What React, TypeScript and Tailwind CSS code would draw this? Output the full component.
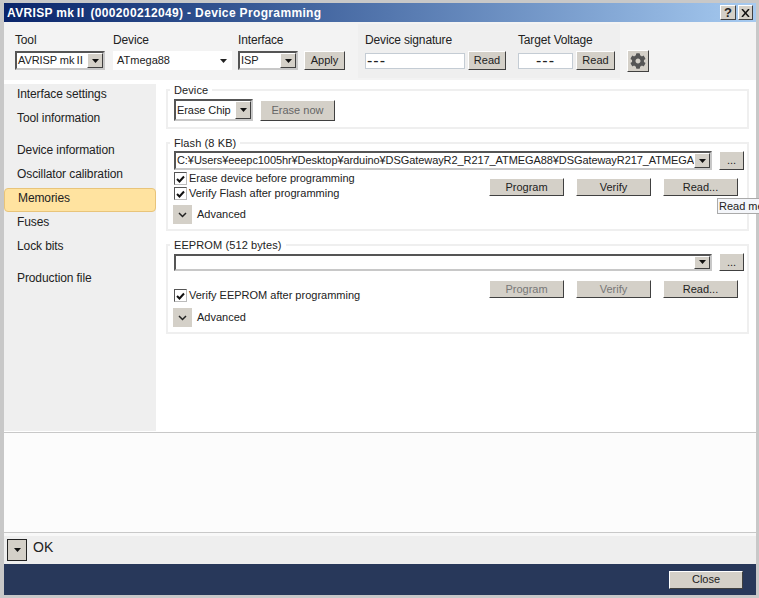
import { FaCog } from 'react-icons/fa';

const raised =
  'border border-t-white border-l-white border-r-[#404040] border-b-[#404040] bg-[#d4d0c8] text-[11px] text-[#222] flex items-center justify-center';

function Btn({ label, className = '', disabled = false }: { label: string; className?: string; disabled?: boolean }) {
  return <button className={`${raised} ${disabled ? 'text-[#777]' : ''} ${className}`}>{label}</button>;
}

function ArrowBox() {
  return (
    <span className={`${raised} w-4 h-full shrink-0`}>
      <svg width="7" height="4" viewBox="0 0 7 4">
        <path d="M0 0h7L3.500 4z" fill="#111" />
      </svg>
    </span>
  );
}

function Select({ value, className = '' }: { value: string; className?: string }) {
  return (
    <div className={`flex items-center bg-white border-2 border-t-[#555] border-l-[#555] border-r-[#c8c8c8] border-b-[#c8c8c8] ${className}`}>
      <span className="flex-1 min-w-0 overflow-hidden whitespace-nowrap pl-px text-[11px] tracking-[-0.08px] text-[#222]">{value}</span>
      <ArrowBox />
    </div>
  );
}

function Check({ label, className = '' }: { label: string; className?: string }) {
  return (
    <label className={`flex items-center h-[15px] text-[11px] text-[#222] ${className}`}>
      <span className="w-[13px] h-[13px] shrink-0 mr-[2px] bg-white border border-t-[#555] border-l-[#555] border-r-[#bbb] border-b-[#bbb] flex items-center justify-center">
        <svg width="9" height="8" viewBox="0 0 9 8">
          <path d="M1 4l2.500 2.500L8 1.500" fill="none" stroke="#111" strokeWidth="2" />
        </svg>
      </span>
      {label}
    </label>
  );
}

function Advanced() {
  return (
    <div className="flex items-center -ml-px">
      <span className="w-[19px] h-[19px] bg-[#d4d0c8] flex items-center justify-center">
        <svg width="9" height="6" viewBox="0 0 9 6">
          <path d="M1 1l3.500 3.500L8 1" fill="none" stroke="#222" strokeWidth="1.500" />
        </svg>
      </span>
      <span className="ml-[5px] text-[11px] text-[#222]">Advanced</span>
    </div>
  );
}

function Group({ title, children }: { title: string; children: React.ReactNode }) {
  return (
    <fieldset className="border-2 border-[#efefef] min-w-0 pl-1.5 pr-[3px]">
      <legend className="-ml-1 px-1 text-[11px] tracking-[0.1px] leading-3 text-[#222]">{title}</legend>
      {children}
    </fieldset>
  );
}

function NavItem({ label, active = false }: { label: string; active?: boolean }) {
  return (
    <div
      className={`h-6 pb-1 pl-[13px] flex items-center text-xs tracking-[-0.1px] text-[#222] rounded-sm ${
        active ? 'bg-[#ffe3a0] border border-[#e8c47a] pl-3' : ''
      }`}
    >
      {label}
    </div>
  );
}

function FieldLabel({ text }: { text: string }) {
  return <div className="text-xs tracking-[-0.15px] leading-3 mb-[5px] text-[#222]">{text}</div>;
}

export default function App() {
  return (
    <div className="relative w-[759px] h-[598px] overflow-hidden bg-[#c8c8c8] pl-1 pr-[3px] pt-[3px] pb-[3px] font-['Liberation_Sans','Noto_Sans_CJK_JP',sans-serif]">
      {/* title bar */}
      <div className="h-[19px] flex items-center pl-[3px] pr-[3px] bg-gradient-to-r from-[#0a246a] to-[#a6caf0]">
        <span className="flex-1 text-xs font-bold tracking-[0.35px] text-white whitespace-nowrap">
          AVRISP mkⅡ (000200212049) - Device Programming
        </span>
        <button className={`${raised} w-[16px] h-[15px] font-bold !text-[13px] mr-[2px]`}>?</button>
        <button className={`${raised} w-[15px] h-[15px]`}>
          <svg width="9" height="8" viewBox="0 0 9 8">
            <path d="M1 0l7 8M8 0l-7 8" stroke="#111" strokeWidth="1.500" />
          </svg>
        </button>
      </div>

      {/* toolbar */}
      <div className="h-[58px] flex bg-[#f3f3f3] pl-[11px]">
        <div className="flex items-end pb-[10px]">
          <div className="w-[90px] mr-2">
            <FieldLabel text="Tool" />
            <Select value="AVRISP mkⅡ" className="h-[19px]" />
          </div>
          <div className="w-[119px] mr-1.5">
            <FieldLabel text="Device" />
            <div className="h-[19px] bg-white flex items-center justify-between pl-1 pr-[5px] text-[11px] text-[#222]">
              ATmega88
              <svg width="7" height="4" viewBox="0 0 7 4">
                <path d="M0 0h7L3.500 4z" fill="#222" />
              </svg>
            </div>
          </div>
          <div className="w-[60px] mr-1.5">
            <FieldLabel text="Interface" />
            <Select value="ISP" className="h-[19px]" />
          </div>
          <Btn label="Apply" className="w-[41px] h-[19px]" />
        </div>

        <div className="ml-[13px] my-0.5 pl-[7px] pr-[5px] pt-2.5 bg-[#efefef] flex">
          <div>
            <FieldLabel text="Device signature" />
            <div className="flex items-center gap-[3px]">
              <div className="w-[100px] h-4 bg-white border border-[#c4ccd4] pl-px text-base tracking-[1px] leading-[14px] text-[#222]">---</div>
              <Btn label="Read" className="w-[38px] h-[19px]" />
            </div>
          </div>
          <div className="ml-3">
            <FieldLabel text="Target Voltage" />
            <div className="flex items-center gap-[3px]">
              <div className="w-[55px] h-4 bg-white border border-[#c4ccd4] text-center text-base tracking-[1px] leading-[14px] text-[#222]">---</div>
              <Btn label="Read" className="w-[39px] h-[19px]" />
            </div>
          </div>
        </div>

        <button className={`${raised} ml-[7px] mt-[28px] w-[22px] h-[22px]`}>
          <FaCog className="w-4 h-4 text-[#555]" />
        </button>
      </div>

      {/* body */}
      <div className="h-[352px] flex bg-white pt-1 pb-px">
        <div className="w-[152px] bg-[#efefef] flex flex-col">
          <NavItem label="Interface settings" />
          <NavItem label="Tool information" />
          <div className="h-2 shrink-0" />
          <NavItem label="Device information" />
          <NavItem label="Oscillator calibration" />
          <NavItem label="Memories" active />
          <NavItem label="Fuses" />
          <NavItem label="Lock bits" />
          <div className="h-2 shrink-0" />
          <NavItem label="Production file" />
        </div>

        <div className="flex-1 min-w-0 pl-2.5 pr-[7px] flex flex-col gap-2">
          <Group title="Device">
            <div className="pt-[3px] pb-[6px] flex items-center">
              <Select value="Erase Chip" className="w-[79px] h-[22px]" />
              <Btn label="Erase now" className="ml-[7px] w-[75px] h-[21px] text-[#666]" />
            </div>
          </Group>

          <Group title="Flash (8 KB)">
            <div className="pt-0.5 pb-[5px]">
              <div className="flex items-center gap-[7px]">
                <Select
                  value="C:¥Users¥eeepc1005hr¥Desktop¥arduino¥DSGatewayR2_R217_ATMEGA88¥DSGatewayR217_ATMEGA"
                  className="flex-1 min-w-0 h-[19px]"
                />
                <Btn label="..." className="w-[25px] h-[19px]" />
              </div>
              <div className="flex justify-between pr-1.5 mt-px">
                <div>
                  <Check label="Erase device before programming" />
                  <Check label="Verify Flash after programming" />
                </div>
                <div className="flex gap-3 pt-[7px]">
                  <Btn label="Program" className="w-[75px] h-[18px]" />
                  <Btn label="Verify" className="w-[75px] h-[18px]" />
                  <Btn label="Read..." className="w-[75px] h-[18px]" />
                </div>
              </div>
              <div className="mt-1">
                <Advanced />
              </div>
            </div>
          </Group>

          <Group title="EEPROM (512 bytes)">
            <div className="pt-0.5 pb-[5px]">
              <div className="flex items-center gap-[7px]">
                <Select value="" className="flex-1 min-w-0 h-[17px]" />
                <Btn label="..." className="w-[25px] h-[18px]" />
              </div>
              <div className="flex justify-between items-start pr-1.5 mt-[9px]">
                <Check label="Verify EEPROM after programming" className="mt-2" />
                <div className="flex gap-3">
                  <Btn label="Program" disabled className="w-[75px] h-[18px]" />
                  <Btn label="Verify" disabled className="w-[75px] h-[18px]" />
                  <Btn label="Read..." className="w-[75px] h-[18px]" />
                </div>
              </div>
              <div className="mt-[5px]">
                <Advanced />
              </div>
            </div>
          </Group>
        </div>
      </div>

      {/* log */}
      <div className="h-[101px] bg-[#fcfcfc] border-y border-[#c8c8c8]" />

      {/* status */}
      <div className="h-[31px] bg-[#eeeeee] border-t-[3px] border-[#f8f8f8] flex items-center pl-[3px]">
        <span className="w-5 h-[22px] bg-[#d4d0c8] border border-[#222] flex items-center justify-center">
          <svg width="7" height="4" viewBox="0 0 7 4">
            <path d="M0 0h7L3.500 4z" fill="#111" />
          </svg>
        </span>
        <span className="ml-1.5 text-sm leading-none text-[#222] pb-1.5">OK</span>
      </div>

      {/* bottom bar */}
      <div className="h-[31px] bg-[#28385a] flex items-center justify-end pr-[13px]">
        <Btn label="Close" className="w-[74px] h-[18px]" />
      </div>

      {/* tooltip */}
      <div className="absolute left-[717px] top-[198px] w-[60px] h-4 bg-[#f4f6fa] border border-[#aaa] pl-px text-[11px] leading-[14px] text-[#222] whitespace-nowrap">
        Read me
      </div>
    </div>
  );
}
